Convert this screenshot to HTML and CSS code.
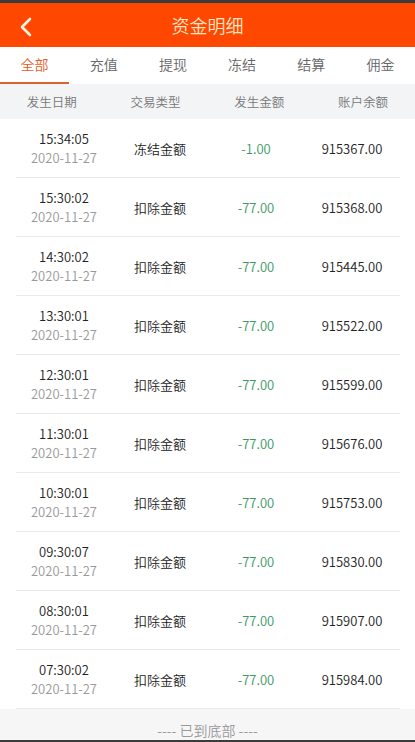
FILE: index.html
```html
<!DOCTYPE html>
<html lang="zh-CN">
<head>
    <meta charset="UTF-8">
    <meta name="viewport" content="width=device-width, initial-scale=1.0">
    <title>资金明细</title>
    <link rel="stylesheet" href="styles.css">
</head>
<body>
    <div class="topbar"></div>
    <div class="header">
        <span class="back">
            <svg width="14" height="20" viewBox="0 0 14 20"><polyline points="11,2 3,10 11,18" fill="none" stroke="#fff4e6" stroke-width="2.6" stroke-linecap="round" stroke-linejoin="round"/></svg>
        </span>
        <div class="title">资金明细</div>
    </div>
    <div class="tabs">
        <div class="tab active">全部</div>
        <div class="tab">充值</div>
        <div class="tab">提现</div>
        <div class="tab">冻结</div>
        <div class="tab">结算</div>
        <div class="tab">佣金</div>
    </div>
    <div class="thead">
        <div>发生日期</div>
        <div>交易类型</div>
        <div>发生金额</div>
        <div>账户余额</div>
    </div>
    <div class="list" id="list"></div>
    <div class="footer">---- 已到底部 ----</div>
    <div class="bottombar"></div>
    <script>
        const rows = [
            ["15:34:05", "冻结金额", "-1.00", "915367.00"],
            ["15:30:02", "扣除金额", "-77.00", "915368.00"],
            ["14:30:02", "扣除金额", "-77.00", "915445.00"],
            ["13:30:01", "扣除金额", "-77.00", "915522.00"],
            ["12:30:01", "扣除金额", "-77.00", "915599.00"],
            ["11:30:01", "扣除金额", "-77.00", "915676.00"],
            ["10:30:01", "扣除金额", "-77.00", "915753.00"],
            ["09:30:07", "扣除金额", "-77.00", "915830.00"],
            ["08:30:01", "扣除金额", "-77.00", "915907.00"],
            ["07:30:02", "扣除金额", "-77.00", "915984.00"]
        ]
        const list = document.getElementById("list")
        for (let r of rows) {
            const row = document.createElement("div")
            row.className = "row"
            row.innerHTML = `<div class="date"><span>${r[0]}</span><span class="day">2020-11-27</span></div>
                <div>${r[1]}</div>
                <div class="money">${r[2]}</div>
                <div>${r[3]}</div>`
            list.appendChild(row)
        }
    </script>
</body>
</html>
```

FILE: styles.css
```css
body{
    margin: 0;
    background-color: #f6f6f7;
    font-family: "Noto Sans CJK SC", "Noto Sans", sans-serif;
    font-weight: 350;
    color: #222;
}
.topbar{
    height: 3px;
    background-color: #3b3b3b;
}
.bottombar{
    height: 2px;
    background-color: #3b3b3b;
}
.header{
    height: 44px;
    background-color: #fe4700;
    display: flex;
    align-items: center;
    justify-content: center;
    position: relative;
}
.back{
    position: absolute;
    left: 19px;
    top: 14px;
}
.title{
    color: #fde6c4;
    font-size: 18px;
}
.tabs{
    display: flex;
    height: 37px;
    background-color: #fff;
}
.tab{
    flex: 1;
    text-align: center;
    font-size: 14px;
    line-height: 35px;
    color: #666;
    border-bottom: 2px solid transparent;
}
.tab.active{
    color: #e35b25;
    border-bottom-color: #d9622f;
}
.thead{
    display: grid;
    grid-template-columns: repeat(4, 1fr);
    height: 35px;
    align-items: center;
    background-color: #f3f4f6;
    font-size: 12.5px;
    color: #777;
    text-align: center;
}
.list{
    background-color: #fff;
}
.row{
    display: grid;
    grid-template-columns: repeat(4, 1fr);
    align-items: center;
    height: 58px;
    margin: 0 15px 0 16px;
    border-bottom: 1px solid #eaeaea;
    font-size: 13px;
    text-align: center;
}
.date{
    display: flex;
    flex-direction: column;
    line-height: 19px;
}
.day{
    color: #999;
}
.money{
    color: #3a9863;
}
.footer{
    height: 31px;
    box-sizing: border-box;
    padding-top: 11px;
    line-height: 20px;
    text-align: center;
    font-size: 14px;
    color: #999;
}
```
